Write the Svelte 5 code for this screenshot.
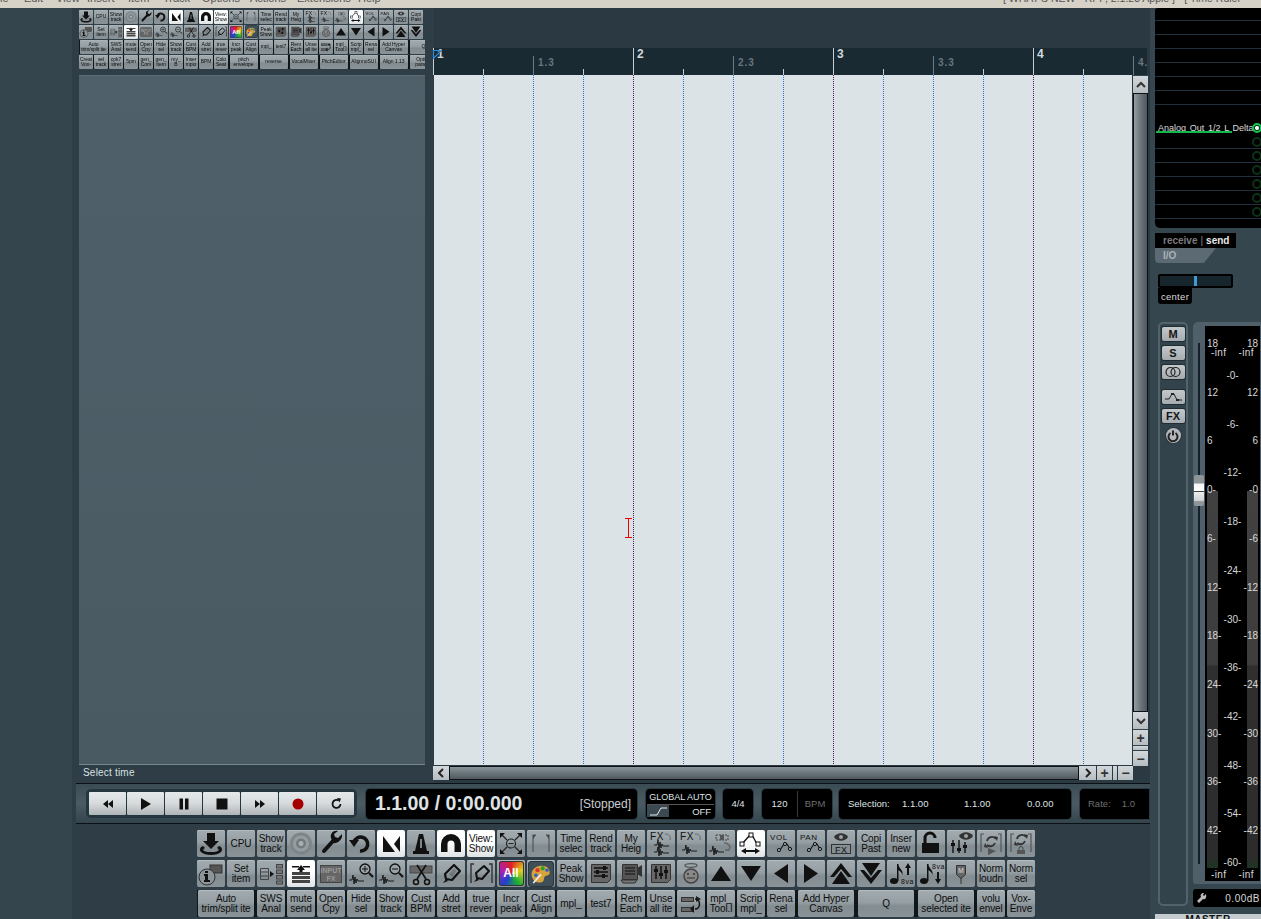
<script>
  const svg = (inner, w = 28, h = 27) =>
    `<svg xmlns="http://www.w3.org/2000/svg" viewBox="0 0 ${w} ${h}" width="${w}" height="${h}" fill="#111" style="display:block">${inner}</svg>`;
  const wave = (y, x = 3) =>
    `<path fill="none" stroke="#111" stroke-width=".9" d="M${x} ${y}h3l1-5 1 9 1-7 1 6 1-4 1 2h6"/>`;
  const eye = (x, y) =>
    `<path fill="#333" d="M${x - 7} ${y}c3-5 11-5 14 0-3 5-11 5-14 0z"/><circle cx="${x}" cy="${y}" r="2" fill="#9aa3a7"/>`;
  const env = (x, y) =>
    `<path fill="none" stroke="#111" stroke-width="1.1" d="M${x} ${y + 7}l3-1 4-6h3l3 5"/><circle cx="${x + 2}" cy="${y + 6}" r="1.6" fill="#9aa3a7" stroke="#111"/><circle cx="${x + 8}" cy="${y}" r="1.6" fill="#9aa3a7" stroke="#111"/><circle cx="${x + 13}" cy="${y + 5}" r="1.6" fill="#9aa3a7" stroke="#111"/>`;
  const label = (x, y, t, s = 9) =>
    `<text x="${x}" y="${y}" font-family="Liberation Sans" font-size="${s}" letter-spacing=".6" fill="#111">${t}</text>`;

  const ICONS = {
    dl: svg(`<path d="M10 3h8v8h4l-8 8-8-8h4z"/><path d="M6 16c-3 1-4 4-2 6s6 3 10 3 8-1 10-3 1-5-2-6l-2 2c2 1 2 2 1 3-2 1-5 1-7 1s-5 0-7-1c-1-1-1-2 1-3z"/>`),
    cd: svg(`<circle cx="14" cy="13.5" r="11" fill="#7d8589"/><circle cx="14" cy="13.5" r="8" fill="#959da1"/><circle cx="14" cy="13.5" r="5" fill="#727a7e"/><circle cx="14" cy="13.5" r="2.5" fill="#a8aeb1"/>`),
    wrench: svg(`<path stroke="#111" stroke-width="4" stroke-linecap="round" d="M7 21l9-10"/><path d="M25 4l-4 4-3-1-1-3 4-3c-5-1-8 3-7 7l2 5c4 1 10-3 9-9z"/>`),
    undo: svg(`<path fill="none" stroke="#111" stroke-width="3.6" d="M13 21a7 7 0 1 0-6-9"/><path d="M2 10h10l-5 7z"/>`),
    snap: svg(`<path d="M6 6v16h12z"/><path d="M23 6v16l-6-8z"/>`),
    metro: svg(`<path d="M12 4h4l4 17h2v3H6v-3h2z"/><path fill="#9aa3a7" d="M13.200 9h1.600v9h-1.600z"/>`),
    magnet: svg(`<path d="M14 4a10 10 0 0 0-10 10v8h6.5v-8a3.5 3.5 0 0 1 7 0v8H24v-8A10 10 0 0 0 14 4z"/>`),
    xzoom: svg(`<g fill="none" stroke="#222" stroke-width="1.2"><circle cx="14" cy="13.5" r="4.5"/><path d="M11.500 13.500h5M10 10L4 4M18 10l6-6M10 17l-6 6M18 17l6 6"/></g><path d="M3 3h5L3 8zM25 3h-5l5 5zM3 24h5l-5-5zM25 24h-5l5-5z"/>`),
    bracket: svg(`<path fill="none" stroke="#555" stroke-width="1.2" d="M6 22V5h3M22 22V5h-3"/><path fill="#444" d="M6 5h3L6 9zM22 5h-3l3 4z"/>`),
    fx1: svg(`${label(3, 10, "FX", 10)}${wave(15, 7)}${wave(22, 7)}<path fill="none" stroke="#666" d="M18 4c4 0 6 2 5 6"/>`),
    fx2: svg(`${label(3, 10, "FX", 10)}${wave(20, 5)}<path fill="none" stroke="#666" d="M18 4c4 0 6 2 5 6"/>`),
    waveArrow: svg(`<path fill="none" stroke="#444" stroke-dasharray="2 1" d="M9 5h12v5H9z"/><rect x="13" y="5" width="4" height="5" fill="#555"/>${wave(21, 2)}<path fill="none" stroke="#666" stroke-width="1.500" d="M17 13c5 0 7 3 5 7h-4"/>`),
    envOn: svg(`<path fill="none" stroke="#111" stroke-width="1.3" d="M5 14l8-9h2l5 9"/><rect x="3" y="12" width="4" height="4" fill="#fff" stroke="#111"/><rect x="12" y="3" width="4" height="4" fill="#fff" stroke="#111"/><rect x="19" y="12" width="4" height="4" fill="#fff" stroke="#111"/><path d="M4 21l5-3v2h9v-2l5 3-5 3v-2H9v2z"/>`),
    vol: svg(`${label(3, 10, "VOL", 8)}${env(10, 14)}`),
    pan: svg(`${label(3, 10, "PAN", 8)}${env(10, 14)}`),
    eyeFx: svg(`${eye(14, 7)}<rect x="4.500" y="14.500" width="19" height="9" fill="none" stroke="#333"/>${label(8, 23, "FX", 9)}`),
    lock: svg(`<path fill="none" stroke="#111" stroke-width="3" d="M8 13V8a5 5 0 0 1 10 0"/><rect x="5" y="13" width="17" height="10"/>`),
    eyeMix: svg(`${eye(19, 6)}<path fill="none" stroke="#111" stroke-width="1.400" d="M6 10v13M12 10v13M18 12v11"/><path d="M4 13h4v3H4zM10 18h4v3h-4zM16 15h4v3h-4z"/>`),
    loopPlay: svg(`<path fill="none" stroke="#555" stroke-width="1.200" d="M4 22V4h3M24 22V4h-3"/><path fill="none" stroke="#333" stroke-width="1.800" d="M10 11a5 5 0 0 1 9-2M18 13a5 5 0 0 1-8 2"/><path fill="#333" d="M17 6l4 1-1 4zM11 18l-4-1 1-4z"/><path fill="#555" d="M11 18l8 3-8 4z"/>`),
    loopLock: svg(`<path fill="none" stroke="#555" stroke-width="1.200" d="M4 22V4h3M24 22V4h-3"/><path fill="none" stroke="#333" stroke-width="1.800" d="M10 9a5 5 0 0 1 9-2M18 11a5 5 0 0 1-8 2"/><path fill="#333" d="M17 4l4 1-1 4zM11 16l-4-1 1-4z"/><path fill="none" stroke="#444" d="M12 20v-1.500a2 2 0 0 1 4 0V20"/><rect x="10" y="20" width="8" height="4" fill="#555"/>`),
    info: svg(`<rect x="13" y="5" width="12" height="8" fill="#555" stroke="#333"/><circle cx="10" cy="17" r="8" fill="#8c9599" stroke="#333"/><path d="M8 11h3v2H8zM7 14h4v6h2v2H7v-2h1v-4H7z"/>`),
    route: svg(`<path fill="none" stroke="#444" d="M3.500 8.500h8v11h-8zM3.500 12h8M3.500 16h8"/><path d="M13 11l4 3-4 3z"/><g fill="#777" stroke="#444"><rect x="19.500" y="4.500" width="6" height="3.500"/><rect x="19.500" y="10" width="6" height="3.500"/><rect x="19.500" y="15.500" width="6" height="3.500"/><rect x="19.500" y="21" width="6" height="3"/></g>`),
    tray: svg(`<path d="M5 6h7v1.500H5zM16 6h7v1.500h-7z"/><path d="M14 5l4 5h-2.500v2h-3v-2H10z"/><path d="M5 12h18v3H5zM5 16h18v3H5zM5 20h18v3H5z" fill="#444"/>`),
    input: svg(`<rect x="3.500" y="5.500" width="21" height="17" fill="#666" stroke="#444"/><text x="14" y="13" text-anchor="middle" font-family="Liberation Sans" font-weight="700" font-size="7" fill="#999">INPUT</text><text x="14" y="20.500" text-anchor="middle" font-family="Liberation Sans" font-weight="700" font-size="7" fill="#999">FX</text>`),
    zoomIn: svg(`${wave(20, 2)}<circle cx="18" cy="9" r="5" fill="#9aa3a7" stroke="#111" stroke-width="1.300"/><path stroke="#111" d="M15 9h6M18 6v6"/><path stroke="#111" stroke-width="2" d="M22 13l4 4"/>`),
    zoomOut: svg(`${wave(20, 2)}<circle cx="18" cy="9" r="5" fill="#9aa3a7" stroke="#111" stroke-width="1.300"/><path stroke="#111" d="M15 9h6"/><path stroke="#111" stroke-width="2" d="M22 13l4 4"/>`),
    scissors: svg(`<rect x="3" y="6" width="22" height="7" fill="#666" stroke="#444"/><path stroke="#111" stroke-width="1.600" d="M19 5L10 19M10 5l9 14"/><circle cx="9" cy="22" r="2.500" fill="none" stroke="#111" stroke-width="1.500"/><circle cx="20" cy="22" r="2.500" fill="none" stroke="#111" stroke-width="1.500"/>`),
    pen: svg(`<path fill="none" stroke="#111" stroke-width="2.200" stroke-linejoin="round" d="M17 5l6 6-8 9-6-1-1-5z"/><path d="M9 19l-3 4 5-2z"/><path d="M12 14l5-6 3 3-5 6z" opacity=".25"/>`),
    penB: svg(`<path fill="none" stroke="#333" stroke-width="1.400" d="M4 23V4h3M25 23V4h-3"/><path fill="none" stroke="#111" stroke-width="2" stroke-linejoin="round" d="M17 6l5 5-7 8-5-1-1-5z"/><path d="M10 18l-3 4 5-2z"/>`),
    all: `<div class="allico">All</div>`,
    palette: `<div class="palico">${svg(`<path fill="#d8a23c" d="M13 4c7-1 12 3 11 9-1 3-5 2-6 4s0 5-3 6c-6 2-12-3-12-9 0-5 4-9 10-10z"/><circle cx="10" cy="9" r="2.500" fill="#d33"/><circle cx="16" cy="7" r="2.500" fill="#2aa12a"/><circle cx="21" cy="9" r="2" fill="#2a5fd0"/><circle cx="8" cy="15" r="2" fill="#2a5fd0"/><path stroke="#eee" stroke-width="2" d="M5 24l9-10"/>`)}</div>`,
    mixPage: svg(`<path fill="#666" stroke="#333" d="M4.500 4.500h19v15l-3 3h-16z"/><path stroke="#111" stroke-width="1.300" d="M7 8h14M7 12h14M7 16h14"/><path d="M16 6h3v4h-3zM9 10h3v4H9zM15 14h3v4h-3z"/>`),
    video: svg(`<path fill="#555" stroke="#333" d="M5.500 4.500h15v15h-15z"/><path fill="none" stroke="#111" d="M8 8h10M8 11h10M8 14h10"/><path fill="#333" d="M20 8l5-3v12l-5-3z"/><path fill="#777" stroke="#333" d="M4 20h16l-2 3H6z"/>`),
    mixFaders: svg(`<path fill="#666" stroke="#333" d="M4.500 4.500h19v15l-3 3h-16z"/><path stroke="#111" stroke-width="1.500" d="M9 6v13M14 6v13M19 6v13"/><path d="M7 9h4v3H7zM12 13h4v3h-4zM17 10h4v3h-4z"/>`),
    angel: svg(`<ellipse cx="14" cy="5.500" rx="6" ry="1.800" fill="none" stroke="#555" stroke-width="1.300"/><circle cx="14" cy="16" r="7" fill="#888" stroke="#444" stroke-width="1.500"/><circle cx="11" cy="14" r="1" fill="#333"/><circle cx="17" cy="14" r="1" fill="#333"/><path fill="none" stroke="#333" d="M10 18h8"/>`),
    up: svg(`<path d="M14 6l10 15H4z"/>`),
    down: svg(`<path d="M14 21L4 6h20z"/>`),
    left: svg(`<path d="M7 13.500L21 4v19z"/>`),
    right: svg(`<path d="M21 13.500L7 23V4z"/>`),
    dup: svg(`<path d="M14 3l11 14h-4L14 9l-7 8H3z"/><path d="M14 11l9 13H5z"/>`),
    ddown: svg(`<path d="M14 24L3 10h4l7 8 7-8h4z"/><path d="M14 16L5 3h18z"/>`),
    noteUp: svg(`<ellipse cx="7" cy="21" rx="4" ry="3"/><path d="M10 4h1.500c0 5 5 5 4 11-1-3-3-4-4-5v11H10z"/><path d="M21 3l3 5h-2v7h-2V8h-2z"/>${label(14, 24, "8va", 7)}`),
    noteDown: svg(`<ellipse cx="7" cy="21" rx="4" ry="3"/><path d="M10 4h1.500c0 5 5 5 4 11-1-3-3-4-4-5v11H10z"/><path d="M21 24l3-5h-2v-7h-2v7h-2z"/>${label(15, 9, "8va", 7)}`),
    pin: svg(`<path fill="#666" stroke="#333" d="M9.500 5.500h9v9l-4.500 4-4.500-4z"/><text x="14" y="13" text-anchor="middle" font-family="Liberation Sans" font-weight="700" font-size="7" fill="#bbb">M</text><path stroke="#333" d="M14 18v6"/>`),
    swap: svg(`<g fill="#666" stroke="#333"><rect x="4.500" y="7.500" width="12" height="4"/><rect x="4.500" y="17.500" width="12" height="4"/></g><path fill="none" stroke="#111" stroke-width="1.500" d="M18 9c6 0 6 10 0 10"/><path d="M17 15v8l-4-4zM24 9l-5-3v6z" opacity=".9"/>`)
  };

  const row1 = [
    { i: "dl" }, { t: "CPU" }, { t: "Show\ntrack" }, { i: "cd" }, { i: "wrench" }, { i: "undo" },
    { i: "snap", on: 1 }, { i: "metro" }, { i: "magnet", on: 1 }, { t: "View:\nShow", on: 1 }, { i: "xzoom" }, { i: "bracket" },
    { t: "Time\nselec" }, { t: "Rend\ntrack" }, { t: "My\nHeig" }, { i: "fx1" }, { i: "fx2" }, { i: "waveArrow" },
    { i: "envOn", on: 1 }, { i: "vol" }, { i: "pan" }, { i: "eyeFx" }, { t: "Copi\nPast" }, { t: "Inser\nnew" },
    { i: "lock" }, { i: "eyeMix" }, { i: "loopPlay" }, { i: "loopLock" }
  ];
  const row2 = [
    { i: "info" }, { t: "Set\nitem" }, { i: "route" }, { i: "tray", on: 1 }, { i: "input" }, { i: "zoomIn" }, { i: "zoomOut" },
    { i: "scissors" }, { i: "pen" }, { i: "penB" }, { i: "all" }, { i: "palette" }, { t: "Peak\nShow" }, { i: "mixPage" },
    { i: "video" }, { i: "mixFaders" }, { i: "angel" }, { i: "up" }, { i: "down" }, { i: "left" }, { i: "right" },
    { i: "dup" }, { i: "ddown" }, { i: "noteUp" }, { i: "noteDown" }, { i: "pin" }, { t: "Norm\nloudn" }, { t: "Norm\nsel" }
  ];
  const row3 = [
    { t: "Auto\ntrim/split ite", w: 1 }, { t: "SWS\nAnal" }, { t: "mute\nsend" }, { t: "Open\nCpy" }, { t: "Hide\nsel" },
    { t: "Show\ntrack" }, { t: "Cust\nBPM" }, { t: "Add\nstret" }, { t: "true\nrever" }, { t: "Incr\npeak" }, { t: "Cust\nAlign" },
    { t: "mpl_" }, { t: "test7" }, { t: "Rem\nEach" }, { t: "Unse\nall ite" }, { i: "swap" }, { t: "mpl_\nTool.l" }, { t: "Scrip\nmpl_" },
    { t: "Rena\nsel" }, { t: "Add Hyper\nCanvas", w: 1 }, { t: "Q", w: 1 }, { t: "Open\nselected ite", w: 1 }, { t: "volu\nenvel" }, { t: "Vox-\nEnve" }
  ];
  const row4 = [
    { t: "Creat\nVox-" }, { t: "sel\ntrack" }, { t: "cpk7\nstret" }, { t: "5pm" }, { t: "gen_\nCom" }, { t: "gen_\nItem" }, { t: "my_\nB" },
    { t: "Inser\nmpio" }, { t: "BPM" }, { t: "Colo\nSeat" }, { t: "pitch\nenvelope", w: 1 }, { t: "reverse", w: 1 }, { t: "VocalMixer", w: 1 },
    { t: "PitchEditor", w: 1 }, { t: "AlignnoSUI", w: 1 }, { t: "Align 1.13", w: 1 }, { t: "Option\nparame", w: 1 }
  ];

  const transport = [
    svg(`<path d="M10 5v8L5 9zM15 5v8l-5-4z"/>`, 20, 18),
    svg(`<path d="M5 3l10 6-10 6z"/>`, 20, 18),
    svg(`<path d="M5.500 3.500h3.500v11H5.500zM11 3.500h3.500v11H11z"/>`, 20, 18),
    svg(`<path d="M4.500 3.500h11v11h-11z"/>`, 20, 18),
    svg(`<path d="M5 5v8l5-4zM10 5v8l5-4z"/>`, 20, 18),
    svg(`<circle cx="10" cy="9" r="5.500" fill="#a40000"/>`, 20, 18),
    svg(`<path fill="none" stroke="#111" stroke-width="1.800" d="M12.500 5.500a4 4 0 1 0 2 3.500"/><path d="M11 3l4 .5-1.500 4z"/>`, 20, 18)
  ];

  const cells = Array.from({ length: 15 }, (_, i) => ({
    kind: i % 4 === 0 ? "bar" : i % 2 === 0 ? "half" : "beat",
    label: i % 4 === 0 ? String(i / 4 + 1) : i % 2 === 0 ? `${Math.floor(i / 4) + 1}.3` : ""
  }));

  const sendRows = ["", "", "", "", "", "", "", "", "analog", "tall", "", "", "", "", ""];

  const scaleStep = 48.7;
  const sides = ["18", "12", "6", "0", "6", "12", "18", "24", "30", "36", "42"];
  const centers = ["0", "6", "12", "18", "24", "30", "36", "42", "48", "54", "60"];
  const sideLabel = (s, i, left) => (i < 3 ? s : left ? `${s}-` : `-${s}`);
</script>

{#snippet bar(row, dark)}
  <div class="row" class:dark>
    {#each row as b}
      <div class="btn" class:on={b.on} class:wide={b.w}>
        {#if b.i}{@html ICONS[b.i]}{:else}<span class="cap">{b.t}</span>{/if}
      </div>
    {/each}
  </div>
{/snippet}

<div class="app">
  <div class="menu">
    <div class="menu-items">
      <span class="m0">le</span><span class="m1">Edit</span><span class="m2">View</span><span class="m3">Insert</span><span class="m4">Item</span><span class="m5">Track</span><span class="m6">Options</span><span class="m7">Actions</span><span class="m8">Extensions</span><span class="m9">Help</span>
    </div>
    <div class="title">[ WHAT'S NEW - RPP, 2.1.23 Apple ] - [ Time Ruler</div>
  </div>

  <div class="main">
    <div class="work">
      <div class="upper">
        <div class="tcp">
          <div class="small-tb">
            <div class="tb">
              {@render bar(row1.slice(0, 23), false)}
              {@render bar(row2.slice(0, 23), false)}
              {@render bar(row3, true)}
              {@render bar(row4, true)}
            </div>
          </div>
          <div class="tracks"></div>
          <div class="status">Select time</div>
        </div>

        <div class="arrange">
          <div class="ruler">
            <svg class="cursor-mark" viewBox="0 0 9 9" width="9" height="9"><path d="M.5 8.500V.5h8z" fill="none" stroke="#2b8de0" stroke-width="1.200"/></svg>
            {#each cells as c}
              <div class="rcell {c.kind}">
                {#if c.label}<span class="rlabel">{c.label}</span>{/if}
              </div>
            {/each}
          </div>
          <div class="arr-mid">
            <div class="canvas">
              {#each cells.slice(1, 14) as c}
                <div class="gcell" class:barline={c.kind === "bar"}></div>
              {/each}
              <svg class="ibeam" viewBox="0 0 9 20" width="9" height="20"><path fill="none" stroke="#e00" d="M1 .5h7M4.500.5v19M1 19.500h7"/></svg>
            </div>
            <div class="vscroll">
              <div class="sb up"><svg viewBox="0 0 14 14" width="14" height="14"><path fill="none" stroke="#333" stroke-width="2" d="M3 9l4-4 4 4"/></svg></div>
              <div class="vthumb"></div>
              <div class="sb down"><svg viewBox="0 0 14 14" width="14" height="14"><path fill="none" stroke="#333" stroke-width="2" d="M3 5l4 4 4-4"/></svg></div>
              <div class="sb plus"><span>+</span></div>
              <div class="sb sliver"></div>
              <div class="sb minus"><span>−</span></div>
            </div>
          </div>
          <div class="hscroll">
            <div class="sb hleft"><svg viewBox="0 0 14 14" width="14" height="14"><path fill="none" stroke="#222" stroke-width="2" d="M9 3L5 7l4 4"/></svg></div>
            <div class="hthumb"></div>
            <div class="sb hright"><svg viewBox="0 0 14 14" width="14" height="14"><path fill="none" stroke="#222" stroke-width="2" d="M5 3l4 4-4 4"/></svg></div>
            <div class="sb hplus"><span>+</span></div>
            <div class="sb hsliver"></div>
            <div class="sb hminus"><span>−</span></div>
          </div>
        </div>
      </div>

      <div class="transport">
        <div class="tgroup">
          {#each transport as t}<div class="tbtn">{@html t}</div>{/each}
        </div>
        <div class="box timebox">
          <span class="time">1.1.00 / 0:00.000</span>
          <span class="stopped">[Stopped]</span>
        </div>
        <div class="box gauto">
          <div class="ga-top">GLOBAL AUTO</div>
          <div class="ga-bot">
            <span class="ga-icon"><svg viewBox="0 0 22 12" width="22" height="12"><path fill="none" stroke="#e8e8e8" d="M3 10h7l4-7h6"/></svg></span>
            <span class="ga-off">OFF</span>
          </div>
        </div>
        <div class="box sig">4/4</div>
        <div class="box bpm"><span class="bpm-v">120</span><span class="bpm-l">BPM</span></div>
        <div class="box sel">
          <span class="s0">Selection:</span><span class="s1">1.1.00</span><span class="s2">1.1.00</span><span class="s3">0.0.00</span>
        </div>
        <div class="box rate"><span>Rate:</span><span>1.0</span></div>
      </div>

      <div class="bottom">
        <div class="tb">
          {@render bar(row1, false)}
          {@render bar(row2, false)}
          {@render bar(row3, true)}
        </div>
      </div>
    </div>

    <div class="right">
      <div class="sends">
        {#each sendRows as r}
          <div class="srow {r}">
            {#if r === "analog"}<span class="sname">Analog Out 1/2 L Delta</span><span class="sgreen"></span>{/if}
          </div>
        {/each}
        <div class="dots">
          {#each [0, 1, 2, 3, 4, 5, 6] as i}<span class="dot" class:live={i === 0}></span>{/each}
        </div>
      </div>
      <div class="rs"><span class="rs-r">receive</span><span class="rs-d">|</span><span class="rs-s">send</span></div>
      <div class="io">I/O</div>
      <div class="pan"><div class="pan-in"><span class="pan-mark"></span></div></div>
      <div class="pan-l">center</div>

      <div class="strip">
        <div class="sbtns">
          <div class="mb bold">M</div>
          <div class="mb bold">S</div>
          <div class="mb"><svg viewBox="0 0 20 12" width="20" height="12"><g fill="none" stroke="#222" stroke-width="1.200"><circle cx="7.500" cy="6" r="4.500"/><circle cx="12.500" cy="6" r="4.500"/></g></svg></div>
          <div class="mb gap"><svg viewBox="0 0 20 12" width="20" height="12"><path fill="none" stroke="#222" d="M2 8h4l3-5h2l3 6h5"/><rect x="8" y="2" width="3" height="2" fill="#222"/><rect x="13" y="8" width="3" height="2" fill="#222"/></svg></div>
          <div class="mb bold">FX</div>
          <div class="power"><svg viewBox="0 0 12 12" width="12" height="12"><path fill="none" stroke="#222" stroke-width="2" d="M3.500 3a4.500 4.500 0 1 0 5 0M6 .5v5"/></svg></div>
        </div>
        <div class="fader-col">
          <div class="fader-panel">
            <div class="rail"><span class="knob"></span></div>
            <div class="meter">
              <span class="chan cl"></span><span class="chan cr"></span>
              <span class="mt inf il" style="top:21px">-inf</span>
              <span class="mt inf ir" style="top:21px">-inf</span>
              <span class="mt inf il" style="top:543px">-inf</span>
              <span class="mt inf ir" style="top:543px">-inf</span>
              {#each sides as s, i}
                <span class="mt ml" style="top:{12 + i * scaleStep}px">{sideLabel(s, i, true)}</span>
                <span class="mt mr" style="top:{12 + i * scaleStep}px">{sideLabel(s, i, false)}</span>
              {/each}
              {#each centers as s, i}
                <span class="mt mc" style="top:{44 + i * scaleStep}px">-{s}-</span>
              {/each}
            </div>
          </div>
          <div class="vol">
            <svg viewBox="0 0 10 10" width="10" height="10"><path fill="#bbb" d="M9 1L7 3 6 2l1-2C4 0 3 2 4 4L0 8l2 2 4-4c2 1 4-1 3-5z"/></svg>
            <span>0.00dB</span>
          </div>
        </div>
      </div>
      <div class="master"><span>MASTER</span></div>
    </div>
  </div>
</div>

<style>
  :global(body) { margin: 0; background: #35454d; }
  .app {
    width: 1261px; height: 919px; overflow: hidden; display: flex; flex-direction: column;
    background: #35454d; font-family: "Liberation Sans", Arial, sans-serif;
  }
  .menu { height: 8px; flex: none; background: #d6d2c8; overflow: hidden; position: relative; color: #555; font-size: 11px; }
  .menu-items { display: flex; margin-top: -9px; height: 15px; line-height: 15px; }
  .menu-items span { display: block; flex: none; }
  .m0 { width: 24px; } .m1 { width: 32px; } .m2 { width: 31px; } .m3 { width: 41px; } .m4 { width: 35px; }
  .m5 { width: 39px; } .m6 { width: 48px; } .m7 { width: 47px; } .m8 { width: 61px; } .m9 { width: 30px; }
  .title { position: absolute; left: 1003px; top: -9px; line-height: 15px; white-space: nowrap; font-size: 10.500px; }

  .main { flex: 1; display: flex; min-height: 0; }
  .work { width: 1150px; flex: none; padding-left: 76px; box-sizing: border-box; display: flex; flex-direction: column; background: linear-gradient(90deg, #35454d 72px, #2f3e46 72px); }
  .upper { height: 775px; flex: none; display: flex; }

  .tcp { width: 358px; flex: none; padding-left: 3px; box-sizing: border-box; display: flex; flex-direction: column; background: #2f3e46; }
  .small-tb { margin-top: 2px; width: 346px; height: 65px; overflow: hidden; flex: none; filter: blur(.35px); }
  .small-tb .tb { zoom: .5; width: 692px; }
  .tracks { width: 346px; height: 690px; flex: none; background: linear-gradient(#4f606a, #495a63); border-top: 1px solid #5a6b74; box-sizing: border-box; border-bottom: 1px solid #76868e; }
  .status { font-size: 10px; letter-spacing: .2px; color: #d9e0e3; padding: 2px 0 0 4px; }

  .tb { display: flex; flex-direction: column; }
  .row { display: flex; gap: 2px; height: 27px; margin-bottom: 3px; flex: none; width: max-content; }
  .row.dark { background: #0f171b; }
  .btn {
    width: 28px; height: 27px; flex: none; box-sizing: border-box; border-radius: 2px; display: flex; align-items: center; justify-content: center; overflow: hidden;
    background: linear-gradient(#a2abaf 0, #969fa4 45%, #828c91 60%, #8a9398 100%);
    box-shadow: inset 0 1px 0 #b5bcc0; color: #0d0d0d;
  }
  .btn.on { background: linear-gradient(#fff, #fbfcfc 50%, #dfe3e5); box-shadow: none; }
  .btn.wide { width: 56px; margin: 0 1px; }
  .cap { white-space: pre; text-align: center; font-size: 10px; line-height: 10px; letter-spacing: -.1px; }
  .btn :global(.allico) {
    width: 25px; height: 25px; border-radius: 3px; color: #fff; font-weight: 700; font-size: 12px; line-height: 25px; text-align: center;
    background: conic-gradient(#e02020, #e0d020, #20b030, #2040d0, #b020b0, #e02020);
    box-shadow: inset 0 0 0 1px #333;
  }
  .btn :global(.palico) { width: 26px; height: 26px; border-radius: 4px; background: #3e4f58; display: flex; align-items: center; justify-content: center; box-shadow: inset 0 0 0 1px #2a363c; }
  .btn :global(.palico svg) { width: 24px; height: 24px; }

  .arrange { width: 716px; flex: none; display: flex; flex-direction: column; padding-top: 40px; box-sizing: border-box; background: #2b3a42; }
  .ruler { height: 27px; flex: none; width: 714px; margin-left: -1px; background: #1a2a33; display: flex; position: relative; overflow: hidden; }
  .cursor-mark { position: absolute; left: 0; top: 2px; z-index: 1; }
  .rcell { width: 50px; flex: none; position: relative; box-sizing: border-box; }
  .rcell::before { content: ""; position: absolute; left: 0; bottom: 0; width: 1px; }
  .rcell.beat::before { height: 6px; background: #c4ced3; }
  .rcell.half::before { height: 19px; background: #6b7a82; }
  .rcell.bar::before { height: 27px; background: #c4ced3; }
  .rlabel { position: absolute; font-weight: 700; }
  .bar .rlabel { left: 4px; top: 0; font-size: 12px; line-height: 13px; color: #cfd8dc; }
  .half .rlabel { left: 5px; top: 9px; font-size: 10px; line-height: 12px; letter-spacing: 1px; color: #68767e; }

  .arr-mid { display: flex; height: 690px; flex: none; }
  .canvas { width: 698px; flex: none; background: #dce3e6; display: flex; position: relative; padding-left: 49px; box-sizing: border-box; overflow: hidden; }
  .gcell {
    width: 50px; flex: none; box-sizing: border-box;
    background: repeating-linear-gradient(#2f74c8 0 1px, transparent 1px 2px) left top / 1px 100% no-repeat;
  }
  .gcell.barline { background-image: repeating-linear-gradient(#4a1550 0 1px, transparent 1px 2px); }
  .ibeam { position: absolute; left: 190px; top: 443px; }

  .vscroll { width: 15px; margin-left: 1px; flex: none; display: flex; flex-direction: column; background: #33434b; }
  .sb { display: flex; align-items: center; justify-content: center; box-sizing: border-box; background: linear-gradient(#d2d8db, #b6bdc1); color: #333; font-weight: 700; font-size: 14px; line-height: 1; flex: none; }
  .up { height: 17px; margin-top: 1px; }
  .vthumb { height: 619px; flex: none; border: 1px solid #0c1216; box-sizing: border-box; background: linear-gradient(90deg, #939da2, #727c82 40%, #4e585d); }
  .down { height: 17px; }
  .plus { height: 15px; margin-top: 1px; }
  .sliver { height: 4px; margin-top: 1px; }
  .minus { height: 15px; margin-top: 1px; }

  .hscroll { height: 14px; margin-top: 1px; width: 698px; margin-left: -1px; display: flex; flex: none; }
  .hleft { width: 16px; }
  .hthumb { width: 630px; flex: none; border: 1px solid #0c1216; box-sizing: border-box; background: linear-gradient(#8a959a, #6a757b 50%, #4f595e); }
  .hright { width: 17px; }
  .hplus { width: 15px; margin-left: 1px; }
  .hsliver { width: 4px; margin-left: 1px; }
  .hminus { width: 15px; margin-left: 1px; }

  .transport {
    height: 41px; flex: none; width: 1074px; box-sizing: border-box; border-top: 1px solid #0a1014; border-bottom: 1px solid #0a1014;
    background: linear-gradient(#3c4c55, #4a5b64 50%, #34444c); display: flex; align-items: center; padding-left: 10px;
  }
  .tgroup { width: 271px; height: 29px; box-sizing: border-box; padding: 3px; border-radius: 5px; background: #24363f; display: flex; gap: 1px; flex: none; }
  .tbtn { width: 37px; flex: none; display: flex; align-items: center; justify-content: center; background: linear-gradient(#e6e9ea, #d6dadc 50%, #afb4b6); border-radius: 1px; }
  .box { background: #000; border-radius: 4px; height: 30px; box-sizing: border-box; flex: none; color: #dfe3e5; box-shadow: 0 0 0 1px #2c3a41; display: flex; align-items: center; }
  .timebox { width: 271px; margin-left: 9px; padding: 0 6px 0 9px; justify-content: space-between; }
  .time { font-size: 19.500px; font-weight: 700; }
  .stopped { font-size: 12px; color: #c8cdd0; }
  .gauto { width: 69px; margin-left: 9px; flex-direction: column; align-items: stretch; padding: 2px 1px 0; font-size: 9px; }
  .ga-top { text-align: center; line-height: 12px; height: 12px; border-bottom: 1px solid #555; padding-bottom: 1px; white-space: nowrap; }
  .ga-bot { display: flex; justify-content: space-between; align-items: center; height: 13px; font-size: 9.500px; }
  .ga-icon { display: block; height: 12px; background: #3b4a52; }
  .ga-off { padding-right: 3px; letter-spacing: -.1px; }
  .sig { width: 30px; margin-left: 8px; justify-content: center; font-size: 9.500px; }
  .bpm { width: 70px; margin-left: 9px; font-size: 9.500px; }
  .bpm-v { width: 35px; text-align: center; border-right: 1px solid #3a3a3a; line-height: 26px; flex: none; }
  .bpm-l { flex: 1; text-align: center; color: #6e6e6e; }
  .sel { width: 232px; margin-left: 7px; font-size: 9.500px; padding-left: 9px; }
  .s0 { width: 54px; flex: none; } .s1 { width: 62px; flex: none; } .s2 { width: 63px; flex: none; }
  .rate { width: 69px; margin-left: 9px; font-size: 9.500px; color: #6e6e6e; padding-left: 8px; gap: 11px; border-radius: 4px 0 0 4px; }

  .bottom { flex: 1; padding: 6px 0 0 121px; background: #2f3e46; }

  .right { width: 111px; flex: none; padding-left: 5px; box-sizing: border-box; display: flex; flex-direction: column; background: #36464e; overflow: hidden; position: relative; }
  .sends { height: 220px; flex: none; background: #000; border-radius: 3px 0 0 5px; position: relative; overflow: hidden; }
  .srow { height: 14px; box-sizing: border-box; border-bottom: 1px solid #1f2f3c; position: relative; }
  .srow:first-child { height: 13px; }
  .srow:nth-child(8) { border-bottom-color: transparent; }
  .srow.analog { border-bottom-color: transparent; }
  .srow.tall { height: 16px; }
  .sname { position: absolute; left: 3px; top: 3px; width: 95px; overflow: hidden; white-space: nowrap; font-size: 9px; line-height: 12px; word-spacing: 1.200px; color: #dcdcdc; }
  .sgreen { position: absolute; left: 1px; top: 12px; width: 76px; height: 2px; background: #12b84a; }
  .dots { position: absolute; right: -1px; top: 115px; display: flex; flex-direction: column; gap: 4px; }
  .dot { width: 10px; height: 10px; border-radius: 50%; box-sizing: border-box; border: 2px solid #0c3318; }
  .dot.live { border: 2.500px solid #18c54c; background: radial-gradient(#fff 0 1.500px, #032 2.500px); }
  .rs { width: 81px; height: 15px; margin-top: 5px; flex: none; background: #000; font-size: 10px; font-weight: 700; line-height: 15px; padding-left: 8px; box-sizing: border-box; white-space: nowrap; }
  .rs-r { color: #7b7b7b; } .rs-d { color: #888; margin: 0 3px; font-weight: 400; } .rs-s { color: #e8e8e8; }
  .io { width: 61px; height: 15px; flex: none; background: #5c6a73; clip-path: polygon(0 0, 100% 0, 80% 100%, 0 100%); border-radius: 0 0 0 4px; font-size: 10px; font-weight: 700; color: #aab2b6; line-height: 15px; padding-left: 8px; box-sizing: border-box; }
  .pan { width: 75px; height: 14px; margin: 11px 0 0 3px; flex: none; background: #000; border-radius: 2px; padding: 2px; box-sizing: border-box; }
  .pan-in { height: 10px; background: #17252c; position: relative; }
  .pan-mark { position: absolute; left: 34px; top: 0; width: 3px; height: 10px; background: #3f9ad0; }
  .pan-l { width: 34px; height: 16px; margin-left: 3px; flex: none; background: #000; color: #dcdcdc; font-size: 9.500px; line-height: 18px; text-align: center; letter-spacing: .3px; border-radius: 0 0 3px 3px; }

  .strip { display: flex; margin-top: 18px; flex: none; height: 592px; }
  .sbtns { margin-left: 3px; width: 30px; height: 584px; flex: none; box-sizing: border-box; border: 2px solid #53636c; border-radius: 5px; padding: 3px 2px 0 2px; display: flex; flex-direction: column; align-items: center; gap: 5px; background: #33434b; }
  .mb { width: 23px; height: 14px; flex: none; border-radius: 2px; background: linear-gradient(#c3c8cb, #a5abae); box-shadow: 0 0 0 1px #202c32; color: #151515; display: flex; align-items: center; justify-content: center; font-size: 11px; line-height: 1; }
  .mb.bold { font-weight: 700; }
  .mb.gap { margin-top: 6px; }
  .power { width: 15px; height: 15px; flex: none; border-radius: 50%; background: #b2b8bb; display: flex; align-items: center; justify-content: center; box-shadow: 0 0 0 1px #2a363c; }

  .fader-col { margin-left: 5px; width: 69px; flex: none; }
  .fader-panel { height: 562px; width: 68px; box-sizing: border-box; background: #4f606a; border-radius: 5px 0 0 3px; padding: 4px 1px 3px 12px; position: relative; }
  .rail { position: absolute; left: 5px; top: 21px; height: 521px; width: 1px; background: #14202a; border-left: 1px solid #14202a; }
  .knob { position: absolute; left: -5px; top: 132px; width: 10px; height: 31px; border-radius: 2px; background: linear-gradient(#8e9598 0 25%, #f4f5f5 30%, #fff 50%, #111 50% 53%, #eee 54%, #d0d3d4 82%, #8f9699 86%); z-index: 1; }
  .meter { height: 555px; background: #000; position: relative; overflow: hidden; }
  .chan { position: absolute; top: 165px; width: 11px; height: 377px; background: linear-gradient(#414141 0, #3d3d3d 46%, #2f2f2f 46.500%, #2c2c2c 97%, #1d3522 100%); }
  .cl { left: 2px; } .cr { right: 2px; }
  .mt { position: absolute; font-size: 10px; line-height: 12px; color: #d8d8d8; white-space: nowrap; }
  .ml { left: 2px; } .mr { right: 2px; } .mc { left: 0; right: 0; text-align: center; }
  .il { left: 6px; } .ir { right: 6px; }
  .inf { letter-spacing: .4px; }
  .vol { margin-top: 5px; width: 69px; height: 18px; background: #000; border-radius: 3px 0 0 3px; display: flex; align-items: center; justify-content: space-between; padding: 0 2px 0 4px; box-sizing: border-box; color: #d8d8d8; font-size: 10px; letter-spacing: .5px; }
  .master { margin-top: 0; height: 10px; flex: none; background: #c4ccd0; color: #111; font-weight: 700; font-size: 10px; text-align: center; line-height: 12px; letter-spacing: .5px; overflow: hidden; }
</style>
